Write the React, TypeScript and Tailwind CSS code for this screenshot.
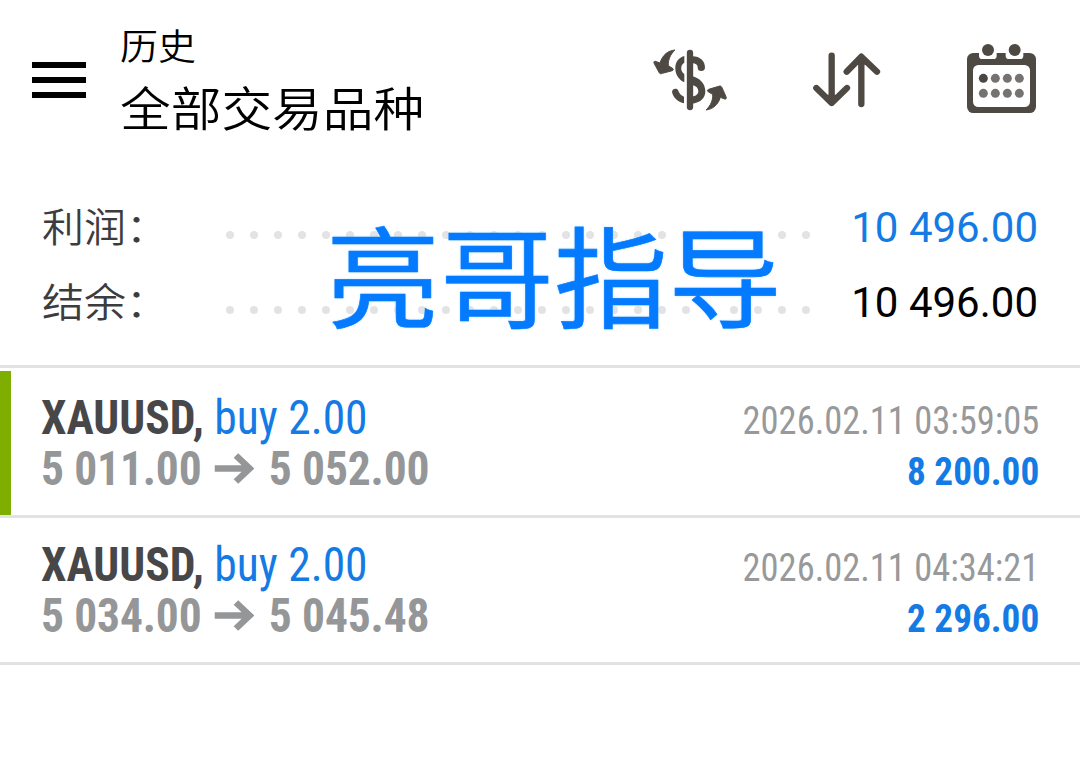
const cjk = 'font-["Noto_Sans_CJK_SC",sans-serif]';
const condensed = 'font-["Roboto_Condensed",Roboto,sans-serif]';

interface Deal {
  symbol: string;
  side: string;
  open: string;
  close: string;
  time: string;
  profit: string;
  active?: boolean;
}

const deals: Deal[] = [
  {
    symbol: 'XAUUSD,',
    side: 'buy 2.00',
    open: '5 011.00',
    close: '5 052.00',
    time: '2026.02.11 03:59:05',
    profit: '8 200.00',
    active: true,
  },
  {
    symbol: 'XAUUSD,',
    side: 'buy 2.00',
    open: '5 034.00',
    close: '5 045.48',
    time: '2026.02.11 04:34:21',
    profit: '2 296.00',
  },
];

function CurrencyIcon() {
  return (
    <svg className="h-[100px] w-[110px]" viewBox="0 0 330 300" fill="#4f4943" stroke="#4f4943">
      <path d="M150 69V231" strokeWidth="19" strokeLinecap="round" />
      <path d="M133 78C114 83 105 99 106 116C107 139 120 150 133 157V132C124 126 122 115 125 107C127 102 130 100 133 98Z" stroke="none" />
      <path d="M98 180C103 175 112 175 115 182C119 192 125 197 132 200V220C116 217 101 204 97 190C96 186 96 183 98 180Z" stroke="none" />
      <path d="M155 79C180 78 195 93 195 113C195 119 190 123 184 123C177 123 173 119 173 113C173 105 169 100 155 100Z" stroke="none" />
      <path d="M155 138C181 144 196 162 196 184C196 205 181 219 155 221V200C168 198 175 193 175 184C175 174 169 168 155 164Z" stroke="none" />
      <path
        d="M105 60C84 62 68 74 60 99L46 94C42 93 40 97 43 101L57 127C59 132 63 132 67 130L97 122C101 120 101 116 96 114L85 107C84 89 91 73 105 60Z"
        strokeWidth="3"
      />
      <path
        d="M198 240C219 237 234 225 241 202L254 207C259 208 260 204 258 200L246 173C244 168 240 167 236 169L206 178C201 180 201 184 206 186L218 193C219 211 212 227 198 240Z"
        strokeWidth="3"
      />
    </svg>
  );
}

function SortIcon() {
  return (
    <svg
      className="h-[100px] w-[100px]"
      viewBox="0 0 300 300"
      fill="none"
      stroke="#4f4943"
      strokeWidth="19"
      strokeLinecap="round"
      strokeLinejoin="round"
    >
      <path d="M95 77V218M49 174L95 219L141 174" />
      <path d="M184 222V81M140 125L184 80L231 125" />
      <path d="M84 204L95 215L106 204ZM173 95L184 84L195 95Z" fill="#4f4943" />
    </svg>
  );
}

function CalendarIcon() {
  return (
    <svg className="h-[100px] w-[110px]" viewBox="0 0 330 300">
      <rect x="51" y="69" width="207" height="180" rx="19" fill="#4f4943" />
      <path d="M87 68H140V77Q140 87 130 87H97Q87 87 87 77ZM167 68H220V77Q220 87 210 87H177Q167 87 167 77Z" fill="#fff" />
      <circle cx="114" cy="60" r="18" fill="#4f4943" />
      <circle cx="194" cy="60" r="18" fill="#4f4943" />
      <rect x="69" y="105" width="171" height="126" rx="16" fill="#fff" />
      {[145, 190].map((cy) =>
        [100, 136, 172, 208].map((cx) => (
          <circle key={`${cx}-${cy}`} cx={cx} cy={cy} r="13.5" fill={cx === 100 && cy === 145 ? '#4a4743' : '#757371'} />
        )),
      )}
    </svg>
  );
}

function Header() {
  return (
    <header className="flex h-[190px] items-start">
      <div className="mt-[62px] ml-8 flex w-[54px] flex-col gap-[9px]">
        <span className="h-1.5 bg-black" />
        <span className="h-1.5 bg-black" />
        <span className="h-1.5 bg-black" />
      </div>
      <div className={`${cjk} mt-[18px] ml-[34px] w-[520px] text-black`}>
        <div className="scale-y-[0.96] text-[38px] leading-[54px] font-[350]">历史</div>
        <div className="mt-1.5 scale-y-[0.92] text-[50.7px] leading-[56px] font-[350]">全部交易品种</div>
      </div>
      <div className="mt-[30px] flex gap-[50px]">
        <CurrencyIcon />
        <SortIcon />
        <CalendarIcon />
      </div>
    </header>
  );
}

function SummaryRow({ label, value, color }: { label: string; value: string; color: string }) {
  return (
    <div className="flex h-[75px] items-center pr-[42px] pl-[42px]">
      <div className={`${cjk} mb-[5px] w-[184px] scale-y-[0.94] text-[42px] leading-[60px] font-[350] text-[#3c3c3e]`}>
        {label}
      </div>
      <div className="mt-[15px] flex gap-4">
        {Array.from({ length: 25 }, (_, i) => (
          <span key={i} className="size-2 rounded-full bg-[#e3e3e5]" />
        ))}
      </div>
      <div className={`ml-auto font-[Roboto,sans-serif] text-[42px] leading-[60px] ${color}`}>{value}</div>
    </div>
  );
}

function DealRow({ deal }: { deal: Deal }) {
  return (
    <div
      className={`${condensed} flex h-36 justify-between border-l-[11px] pt-[21px] pr-[41px] pl-[30px] whitespace-nowrap ${
        deal.active ? 'border-[#7eae00]' : 'border-transparent'
      }`}
    >
      <div className="origin-left scale-x-[0.948] text-[48px] leading-[51px]">
        <div>
          <span className="font-bold text-[#47474a]">{deal.symbol}</span>{' '}
          <span className="text-[#147be4]">{deal.side}</span>
        </div>
        <div className="flex items-center font-bold tracking-[-0.15px] text-[#949698]">
          <span>{deal.open}</span>
          <svg
            className="mr-[15px] ml-[14px] h-[31px] w-[42px]"
            viewBox="0 0 39 31"
            preserveAspectRatio="none"
            fill="none"
            stroke="#949698"
            strokeWidth="6.4"
          >
            <path d="M0 15.5H35M21 2.5L34.5 15.5L21 28.5" />
          </svg>
          <span>{deal.close}</span>
        </div>
      </div>
      <div className="pt-[4px] text-right text-[39px] leading-[51px]">
        <div className="origin-right scale-x-[0.935] text-[#97999b]">{deal.time}</div>
        <div className="origin-right scale-x-[0.955] font-bold text-[#147be4]">{deal.profit}</div>
      </div>
    </div>
  );
}

export default function App() {
  return (
    <div className="h-[776px] w-[1080px] overflow-hidden bg-white">
      <Header />
      <section className="relative h-[175px]">
        <SummaryRow label="利润：" value="10 496.00" color="text-[#147be4]" />
        <SummaryRow label="结余：" value="10 496.00" color="text-black" />
        <div
          className={`${cjk} absolute top-[12px] left-[326px] scale-y-[0.97] text-[114px] leading-[140px] font-normal whitespace-nowrap text-[#047bff] [-webkit-text-stroke:0.6px_#047bff] [text-shadow:0_0_3px_#b9dcff]`}
        >
          亮哥指导
        </div>
      </section>
      <div className="h-1.5 border-t-[3px] border-[#e2e2e2]" />
      {deals.map((deal) => (
        <div key={deal.time} className="border-b-[3px] border-[#e2e2e2]">
          <DealRow deal={deal} />
        </div>
      ))}
    </div>
  );
}
